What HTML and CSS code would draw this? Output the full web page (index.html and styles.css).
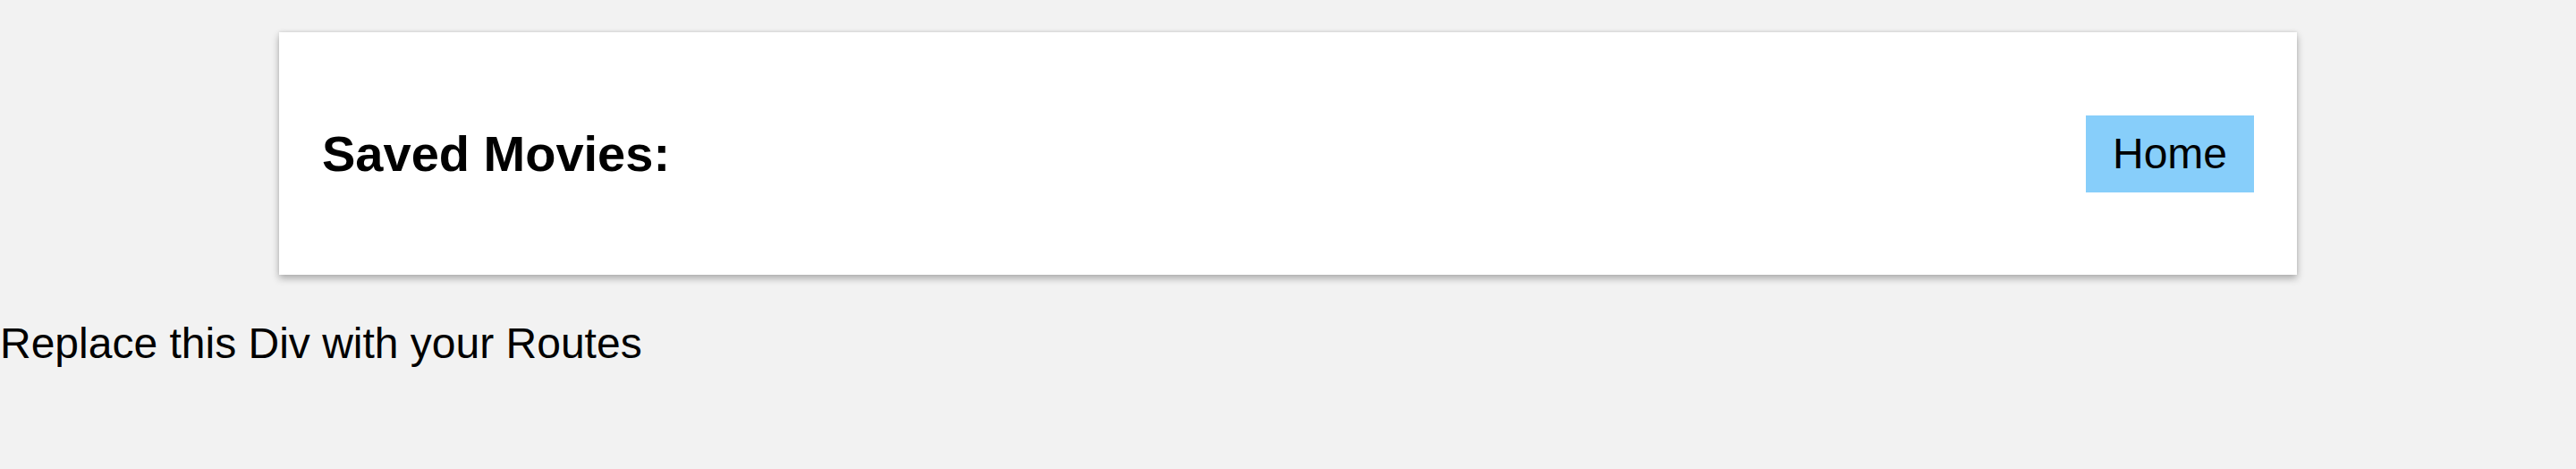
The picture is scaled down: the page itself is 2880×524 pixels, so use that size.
FILE: index.html
```html
<!DOCTYPE html>
<html lang="en">
<head>
    <meta charset="UTF-8">
    <meta name="viewport" content="width=device-width, initial-scale=1.0">
    <title>Saved Movies</title>
    <link rel="stylesheet" href="styles.css">
</head>
<body>
    <div class="app">
        <!-- saved list header -->
        <div class="saved-list">
            <h3 class="saved-title">Saved Movies:</h3>
            <div class="home-button">Home</div>
        </div>

        <div class="routes">Replace this Div with your Routes</div>
    </div>
</body>
</html>
```

FILE: styles.css
```css
* {
    margin: 0;
    padding: 0;
    box-sizing: border-box;
}

body {
    background: #f2f2f2;
    font-family: 'Liberation Sans', Arial, sans-serif;
    color: black;
}

.app {
    padding-top: 36px;
}

/* header card */
.saved-list {
    display: flex;
    align-items: center;
    justify-content: space-between;
    width: 2256px;
    height: 271px;
    margin: 0 auto;
    padding: 0 48px;
    background: white;
    box-shadow: 0 4px 8px rgba(0, 0, 0, 0.3), 0 -1px 3px rgba(0, 0, 0, 0.08);
}

.saved-title {
    font-size: 56px;
    font-weight: bold;
}

.home-button {
    width: 188px;
    height: 86px;
    display: flex;
    align-items: center;
    justify-content: center;
    background: lightskyblue;
    font-size: 48px;
    cursor: pointer;
}

.routes {
    margin-top: 49px;
    font-size: 48px;
}
```
